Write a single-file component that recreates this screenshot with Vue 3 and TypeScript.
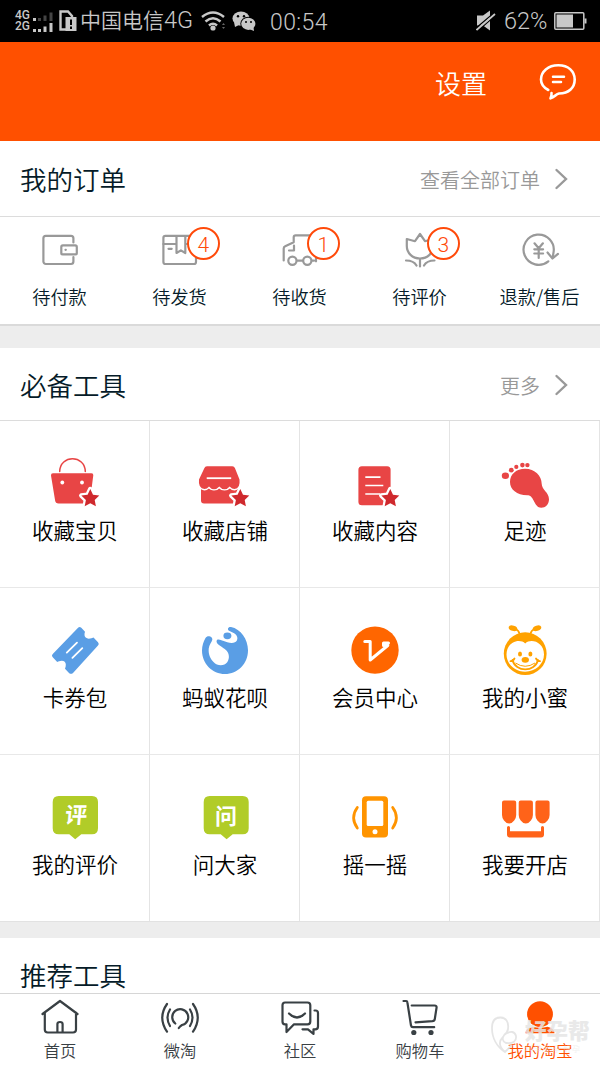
<script setup lang="ts">
interface Order { id: string; label: string; count?: number }
interface Tool { id: string; label: string }

const orders: Order[] = [
  { id: 'pay', label: '待付款' },
  { id: 'ship', label: '待发货', count: 4 },
  { id: 'receive', label: '待收货', count: 1 },
  { id: 'review', label: '待评价', count: 3 },
  { id: 'refund', label: '退款/售后' },
]
const tools: Tool[] = [
  { id: 'bag', label: '收藏宝贝' },
  { id: 'shop', label: '收藏店铺' },
  { id: 'doc', label: '收藏内容' },
  { id: 'foot', label: '足迹' },
  { id: 'ticket', label: '卡券包' },
  { id: 'huabei', label: '蚂蚁花呗' },
  { id: 'member', label: '会员中心' },
  { id: 'bee', label: '我的小蜜' },
  { id: 'rate', label: '我的评价' },
  { id: 'ask', label: '问大家' },
  { id: 'shake', label: '摇一摇' },
  { id: 'open', label: '我要开店' },
]
const tabs: Tool[] = [
  { id: 'home', label: '首页' },
  { id: 'weitao', label: '微淘' },
  { id: 'community', label: '社区' },
  { id: 'cart', label: '购物车' },
  { id: 'me', label: '我的淘宝' },
]
const starred = ['bag', 'shop', 'doc']
const star = 'M90.3 38l2.700 5.700 6.300.9-4.600 4.400 1.200 6.300-5.600-3-5.600 3 1.200-6.300-4.600-4.400 6.300-.9z'
</script>

<template>
  <div class="screen">
    <header class="status">
      <div class="sims">
        <div class="sim"><span>4G</span>
          <svg width="20" height="10" viewBox="0 0 20 10"><rect x="0" y="7" width="3" height="3" fill="#c8c8c8" /><path d="M6.500 10V7M12 10V4.500M18 10V1.500" stroke="#444" stroke-width="3" /></svg>
        </div>
        <div class="sim"><span>2G</span>
          <svg width="20" height="10" viewBox="0 0 20 10"><rect x="0" y="7" width="3" height="3" fill="#c8c8c8" /><path d="M6.500 10V7M12 10V4.500M18 10V1" stroke="#c8c8c8" stroke-width="3" /></svg>
        </div>
      </div>
      <svg class="card" width="18" height="22" viewBox="0 0 18 22">
        <path d="M1.500 1.500H9L13 6V19.500H1.500z" fill="none" stroke="#c8c8c8" stroke-width="2.400" />
        <rect x="6.500" y="7" width="11" height="14" fill="#c8c8c8" /><path d="M12 9.500v5.500M12 16.500v2.500" stroke="#000" stroke-width="2" />
      </svg>
      <span class="carrier">中国电信<i>4G</i></span>
      <svg class="wifi" width="24" height="20" viewBox="0 0 24 20" fill="none" stroke="#c8c8c8" stroke-width="2.500">
        <path d="M1 6Q12-3 23 6M4.500 10.500Q12 4 19.500 10.500M8 14.500Q12 11 16 14.500" /><circle cx="12" cy="17" r="2.600" fill="#c8c8c8" stroke="none" />
        <path d="M21 14l1.500-2 1.500 2zM21 16l1.500 2 1.500-2z" fill="#666" stroke="none" />
      </svg>
      <svg class="wechat" width="24" height="20" viewBox="0 0 24 20">
        <path d="M2 11L3 16l3.500-1.800 2.800.4z" fill="#c8c8c8" />
        <ellipse cx="9" cy="7.500" rx="8.500" ry="7" fill="#c8c8c8" /><ellipse cx="16.300" cy="12.800" rx="8" ry="7" fill="#000" />
        <ellipse cx="16.300" cy="12.800" rx="7.100" ry="6.100" fill="#c8c8c8" /><path d="M17 18l5 2-.5-4z" fill="#c8c8c8" />
        <g fill="#000"><circle cx="6" cy="5.200" r="1.200" /><circle cx="12" cy="5.200" r="1.200" /><circle cx="14" cy="11" r="1" /><circle cx="19" cy="11" r="1" /></g>
      </svg>
      <span class="time">00:54</span>
      <span class="grow"></span>
      <svg class="mute" width="20" height="22" viewBox="0 0 20 22">
        <path d="M1 5.500h6L14 .5v20L7 15.500H1z" fill="#c8c8c8" /><path d="M-1 19L18.500 2.500M1 21.500L20 5" stroke="#000" stroke-width="1.300" /><path d="M.5 20L19 4" stroke="#c8c8c8" stroke-width="1.700" />
      </svg>
      <span class="percent">62%</span>
      <svg class="battery" width="33" height="18" viewBox="0 0 33 18">
        <rect x=".8" y=".8" width="29" height="16.400" rx="1" fill="none" stroke="#c8c8c8" stroke-width="1.500" /><rect x="2.500" y="2.500" width="16.500" height="13" fill="#c8c8c8" /><rect x="30.500" y="6.500" width="2" height="5" fill="#c8c8c8" />
      </svg>
    </header>

    <div class="hero">
      <span class="settings">设置</span>
      <svg class="chat" width="40" height="40" viewBox="0 0 40 40" fill="none" stroke="#fff" stroke-width="2.600" stroke-linecap="round" stroke-linejoin="round">
        <path d="M10.300 30C5.500 27.500 3 23.500 3 19.500 3 11.500 10 5.300 20.300 5.300s16.400 6.200 16.400 14.200S31 33.500 21 33.500c-3 .7-4.500 3.500-8.500 4.800.8-1.500 1.300-3.300 1-5.300" />
        <path d="M15 16.700h11M15 22h8" stroke-width="2.500" />
      </svg>
    </div>

    <section class="orders">
      <div class="heading order-heading"><h2>我的订单</h2><span class="more">查看全部订单</span>
        <svg class="chevron" width="14" height="22" viewBox="0 0 14 22"><path d="M2.500 2L12 11 2.500 20" /></svg>
      </div>
      <div class="order-row">
        <div v-for="o in orders" :key="o.id" class="order">
          <svg width="120" height="50" viewBox="0 0 120 50" fill="none" stroke="#999" stroke-width="2.200" stroke-linecap="round" stroke-linejoin="round">
            <template v-if="o.id === 'pay'">
              <path d="M73.400 17.500V13.200a2.400 2.400 0 0 0-2.400-2.400H45.800a2.400 2.400 0 0 0-2.400 2.400v23.400a2.400 2.400 0 0 0 2.400 2.400H71a2.400 2.400 0 0 0 2.400-2.400V32" />
              <rect x="61.300" y="20.400" width="15.500" height="9" rx="1.500" /><path d="M65.500 24.800h.3" />
            </template>
            <template v-else-if="o.id === 'ship'">
              <rect x="43.400" y="10.800" width="32.600" height="28.200" rx="2" /><path d="M43.400 19H56M65.500 19H76M56.500 11v17l4.400-2.600 4.400 2.600V11M48.500 23.800h3.200" />
            </template>
            <template v-else-if="o.id === 'receive'">
              <path d="M43.700 35.500V23.500q0-1.500 1.500-2.200l8.500-4v-5q0-2 2-2H76v26M49 25.500h5V20.500M57 35.700h6M72 35.700h2" /><circle cx="52.400" cy="35.700" r="4.100" /><circle cx="67.300" cy="35.700" r="4.100" />
            </template>
            <template v-else-if="o.id === 'review'">
              <path d="M46.800 14l8.200 2.200L60 9l5 7.200 8.200-2.200v7c0 7-5.500 12.500-13.200 12.500S46.800 28 46.800 21zM60 34v7.500M46 35.500c4.500 0 8.500 1.500 10.500 5M74.500 35.500c-4.500 0-8.500 1.500-10.500 5" />
            </template>
            <template v-else>
              <path d="M68.300 36.300A15.100 15.100 0 1 1 73.500 27.500L72.700 32.500M67.500 27.500l5 6 5.500-4.600" />
              <path d="M54.500 18.300l4.200 5 4.200-5M54.300 24.300h8.800M54.300 28.500h8.800M58.700 23.500v9.500" />
            </template>
          </svg>
          <span v-if="o.count" class="badge">{{ o.count }}</span>
          <span class="order-label">{{ o.label }}</span>
        </div>
      </div>
    </section>

    <section class="tools">
      <div class="heading tool-heading"><h2>必备工具</h2><span class="more">更多</span>
        <svg class="chevron" width="14" height="22" viewBox="0 0 14 22"><path d="M2.500 2L12 11 2.500 20" /></svg>
      </div>
      <div class="grid">
        <div v-for="t in tools" :key="t.id" class="tool">
          <svg width="150" height="60" viewBox="0 0 150 60">
            <template v-if="t.id === 'bag'">
              <path d="M59.700 20.500C60 3.500 85 3.500 85.300 20.500" fill="none" stroke="#e84545" stroke-width="1.500" stroke-linecap="round" />
              <path d="M53 22.300H91.500q2 0 1.800 2L90 49.500q-.4 3-3 3H58.500q-3 0-3.400-3L51 24.500q-.2-2.200 2-2.200z" fill="#e84545" />
              <circle cx="62.300" cy="31.500" r="1.900" fill="#fff" /><circle cx="82" cy="31.500" r="1.900" fill="#fff" />
            </template>
            <template v-else-if="t.id === 'shop'">
              <path d="M51 36H88V52.500H54q-3 0-3-3z" fill="#e84545" />
              <path d="M57 15.300H82.300q2 0 2.700 2L89.500 28.500Q90.500 37.500 84.500 38 82 38 79.700 35.500 77.500 38.200 74.500 38.200T69.300 35.500Q67 38.200 64 38.200T59 35.500Q57 38 54.500 38 48 37.500 49 28.500L54.300 17.300Q55 15.300 57 15.300z" fill="#e84545" stroke="#fff" stroke-width="2.800" stroke-linejoin="round" paint-order="stroke" />
              <path d="M56.700 27.200h24.500" stroke="#fff" stroke-width="1.800" />
            </template>
            <template v-else-if="t.id === 'doc'">
              <rect x="58.400" y="15.300" width="32.200" height="39" rx="3.500" fill="#e84545" /><path d="M65.300 26.200h15.200M65.300 34.500H83.300M65.300 43H80" stroke="#fff" stroke-width="1.700" />
            </template>
            <g v-else-if="t.id === 'foot'" fill="#e84545">
              <ellipse cx="55.400" cy="24.800" rx="3.600" ry="3.200" /><circle cx="61.300" cy="19.200" r="2.400" /><circle cx="66.300" cy="15.900" r="2.100" /><circle cx="72.400" cy="14.100" r="2.300" /><circle cx="77.400" cy="14.100" r="2.200" />
              <path d="M60 31c0-8 6.500-13.300 15-13.300 10 0 16.500 7 16.700 15 0 6 7.300 8.500 7.300 15.500 0 5-3.500 8.500-7.800 8.500-7 0-7.200-12-13-12.500C67 44.500 60 38.500 60 31z" />
            </g>
            <template v-else-if="t.id === 'ticket'">
              <path d="M78.300 9.500q1.500-1 3 .3l3.700 4q-1.300 4 .7 5.800t5.800.6l2-.7 4.500 4.800q1.600 1.700 0 3.300L73 55q-2 1.700-4 0l-4-4.200q1.800-5-.3-7t-6.500-.2l-1 .4-4.200-4.500q-2-2 0-3.800z" fill="#5a9ee5" />
              <path d="M66.800 34.600L77 24.700M72.400 39.900L82.300 30.200" stroke="#fff" stroke-width="1.800" stroke-linecap="round" />
            </template>
            <template v-else-if="t.id === 'huabei'">
              <path d="M55.500 20c2-3.500 7.500-1.300 6.800 1.800-.3 2-3.300 5-3.600 9C58.300 37 60.500 41 63.500 44c4 4.500 11 4 13.700.3 2.800-4 2-9-1-12-3.500-3.500-9.700-5-9.700-9.200.4-3 4.500-1.200 6.500-.4 5 2.300 12 3.800 14-.5 2-5-3.500-7.500-7.500-9.200-2.800-1.300-1.500-4.500 1.500-4 9.700 2 17 12 17 23.300 0 13.500-10.300 23.800-23 23.800S52 45.500 52 32.500C52 27.500 53.500 23.500 55.500 20z" fill="#5a9ee5" />
              <ellipse cx="77.400" cy="17.800" rx="4" ry="3.400" fill="#5a9ee5" />
            </template>
            <template v-else-if="t.id === 'member'">
              <circle cx="75" cy="32.100" r="23.700" fill="#ff6600" />
              <path d="M64.800 23.500H70.200V42L87.800 27.500H83.500V25H88.500" fill="none" stroke="#fff" stroke-width="3" stroke-linecap="round" stroke-linejoin="round" />
            </template>
            <template v-else-if="t.id === 'bee'">
              <g fill="#ffa200">
                <ellipse cx="63" cy="10.200" rx="4.400" ry="2.700" transform="rotate(18 63 10.200)" /><ellipse cx="87" cy="10.200" rx="4.400" ry="2.700" transform="rotate(-18 87 10.200)" />
                <path d="M65.500 11Q69 12.500 69.500 16M84.500 11Q81 12.500 80.500 16" fill="none" stroke="#ffa200" stroke-width="1.700" />
                <circle cx="75.200" cy="35.700" r="21.400" />
                <path d="M75.200 25.500C69.500 20 56.500 24 56.500 36.500 56.500 46 65 53.700 75.200 53.700S94 46 94 36.500C94 24 81 20 75.200 25.500z" fill="#fff" />
                <ellipse cx="70" cy="36" rx="2" ry="2.600" /><ellipse cx="80.400" cy="36" rx="2" ry="2.600" /><ellipse cx="75.300" cy="41.800" rx="3.700" ry="2.900" />
                <path d="M60.500 43.200q2.500 0 4-2.700M62.500 42C65.500 54.500 85 54.500 88 42M90 43.200q-2.500 0-4-2.700" fill="none" stroke="#ffa200" stroke-width="1.800" stroke-linecap="round" />
                <path d="M65.500 45Q75.200 51.500 85 45" fill="none" stroke="#ffa200" stroke-width="1" />
              </g>
            </template>
            <template v-else-if="t.id === 'rate'">
              <path d="M58.700 11H92q6 0 6 6V43.300q0 6-6 6H81.300L75.200 54.200 69.300 49.300H58.700q-6 0-6-6V17q0-6 6-6z" fill="#b1cc28" /><text class="glyph" transform="translate(75.500 38) skewX(-5)">评</text>
            </template>
            <template v-else-if="t.id === 'ask'">
              <path d="M59.700 11H92.700q6 0 6 6V43.300q0 6-6 6H82.700L76.600 54.200 70.700 49.300H59.700q-6 0-6-6V17q0-6 6-6z" fill="#b1cc28" /><text class="glyph" x="76" y="39">问</text>
            </template>
            <template v-else-if="t.id === 'shake'">
              <rect x="62" y="11.200" width="26" height="41.200" rx="4" fill="#ff9400" /><rect x="66.700" y="15.800" width="16.600" height="25.300" rx="1.500" fill="#fff" /><circle cx="75" cy="46.700" r="2.500" fill="#fff" />
              <path d="M57.300 22.500Q50 32.700 57.300 43M92.700 22.500Q100 32.700 92.700 43" fill="none" stroke="#ff9400" stroke-width="2.800" stroke-linecap="round" />
            </template>
            <g v-else fill="#ff6319">
              <path v-for="x in [52, 68.700, 85.400]" :key="x" :transform="`translate(${x} 15.400)`" d="M2 0H12.200q2 0 2 2V14.500q0 3-2 5.500Q10 23 7.100 23T2 20Q0 17.500 0 14.500V2Q0 0 2 0z" />
              <path d="M58.500 41q1.500 0 1.500 1.500V46.200H91V42.500q0-1.500 1.500-1.500T94 42.500v7q0 3-3 3H60q-3 0-3-3v-7q0-1.500 1.500-1.500z" />
            </g>
            <path v-if="starred.includes(t.id)" :d="star" fill="#cf292d" stroke="#fff" stroke-width="4.500" stroke-linejoin="round" paint-order="stroke" />
          </svg>
          <span class="tool-label">{{ t.label }}</span>
        </div>
      </div>
    </section>

    <section class="suggested"><h2>推荐工具</h2></section>

    <nav class="tabs">
      <div v-for="t in tabs" :key="t.id" class="tab" :class="{ active: t.id === 'me' }">
        <svg width="120" height="43" viewBox="0 0 120 43" fill="none" stroke="#394044" stroke-width="2.200" stroke-linecap="round" stroke-linejoin="round">
          <path v-if="t.id === 'home'" d="M42.500 19L60 6l17.500 13M44.800 17.500V34.500q0 3 3 3H73q3 0 3-3v-17M57.400 37V29q0-2 2.600-2t2.600 2v8" />
          <path v-else-if="t.id === 'weitao'" d="M58.800 33q1-1.500 3.200-3A8 8 0 1 0 55.300 28.500M50 14.500Q45 22.500 50 31M70 14.500Q75 22.500 70 31M47 9Q37.500 22.500 47 36.700M73 9Q82.500 22.500 73 36.700" />
          <path v-else-if="t.id === 'community'" d="M45 7.500H67.500q2.800 0 2.800 2.800V26.500q0 2.800-2.800 2.800H54L46.500 37v-7.700H45q-2.500 0-2.500-2.800V10.300q0-2.800 2.500-2.800zM49 18.500Q57 26.500 65 18.500M74.500 15.500H75.500q2.500 0 2.500 2.500V31.500q0 2.800-2.800 2.800H73.500V39L68 34.300H62.500" />
          <template v-else-if="t.id === 'cart'"><path d="M43.500 6h2.700q1 0 1.200 1.500L51 30.500q.3 1.700 2 1.700H74.200M51.700 10.500H74.500q2.500 0 2 2.500L74.800 24q-.3 2-2.500 2.200L55.500 27.300" /><g fill="#394044" stroke="none"><circle cx="53.800" cy="37.500" r="2.600" /><circle cx="71" cy="37.500" r="2.600" /></g></template>
          <g v-else fill="#ff5000" stroke="none"><circle cx="60" cy="19.200" r="12.900" /><path d="M45.500 38.300q0-5 7-6.500 7.500 2 15 0 7 1.500 7 6.500z" /></g>
        </svg>
        <span class="tab-label">{{ t.label }}</span>
      </div>
    </nav>

    <div class="watermark">
      <svg width="27" height="40" viewBox="0 0 27 40" fill="none" stroke="#e1e1e1" stroke-width="1.800">
        <path d="M14 36C6 31 1 22 1 12 1 5 4 1.500 9.500 1.500S18 6 17 13q-.5 4-4 6M14 18q9-5 11 2 1 8-10 7-6-3-1-9zM12 21q-7 7 2 15l7-7" />
      </svg>
      <div class="mark-words"><b>好孕帮</b><small>科学 助孕 好孕</small></div>
    </div>
  </div>
</template>

<style>
html, body { margin: 0; background: #fff; overflow: hidden; }
</style>

<style scoped>
.screen { position: relative; width: 600px; height: 1067px; overflow: hidden; display: flex; flex-direction: column; background: #ededed; font-family: "Noto Sans CJK SC", sans-serif; font-weight: 350; }
.screen * { box-sizing: border-box; }
.screen svg { display: block; flex: none; }
.status { height: 41.500px; flex: none; background: #000; color: #c8c8c8; display: flex; align-items: center; padding: 0 13px 0 15px; white-space: nowrap; }
.sims { width: 39px; padding-top: 1px; }
.sim { height: 11px; display: flex; align-items: center; font: 500 12px/11px Roboto, sans-serif; }
.sim span { width: 18px; }
.card { margin-left: 5px; }
.carrier { width: 118px; margin-left: 3px; font-size: 21px; line-height: 38px; margin-top: -3px; }
.carrier i { font: 300 23.500px Roboto, sans-serif; }
.wifi { margin-left: 3px; }
.wechat { margin-left: 7px; }
.time { margin-left: 14px; font: 300 23px/41px Roboto, sans-serif; padding-top: 3px; letter-spacing: .4px; }
.grow { flex: 1; }
.percent { width: 46px; margin-left: 8px; font: 300 23.500px/41px Roboto, sans-serif; padding-top: 2px; }
.battery { margin-left: 4px; }
.hero { height: 99.500px; flex: none; background: #ff5000; color: #fff; display: flex; align-items: center; justify-content: flex-end; padding: 0 22px 16px 0; }
.settings { font-size: 26px; line-height: 40px; margin-right: 51px; }
.chat { margin-top: -7px; }
.orders { height: 185px; flex: none; background: #fff; border-bottom: 2px solid #dadada; }
.heading { display: flex; align-items: center; padding: 0 32px 0 20px; border-bottom: 1px solid #dcdcdc; }
.order-heading { height: 75.500px; padding-top: 1px; }
h2 { flex: 1; margin: 0; font-size: 26.500px; line-height: 36px; font-weight: 350; color: #051b28; }
.more { color: #999; font-size: 20px; line-height: 30px; margin-right: 14px; padding-top: 2px; }
.chevron { fill: none; stroke: #999; stroke-width: 2.400; stroke-linecap: round; }
.order-row { display: flex; padding-top: 8.500px; }
.order { position: relative; width: 120px; display: flex; flex-direction: column; align-items: center; }
.badge { position: absolute; left: 66.800px; top: 1.800px; width: 33px; height: 33px; border: 2.500px solid #ff4a0a; border-radius: 50%; background: #fff; color: #ff4a0a; font: 300 21px/32px Roboto, sans-serif; text-align: center; }
.order-label { margin: 6.500px 1px 0 0; font-size: 18.200px; line-height: 28px; color: #051b28; white-space: nowrap; }
.tools { margin-top: 22px; height: 574px; flex: none; background: #fff; border-bottom: 1px solid #e2e2e2; }
.tool-heading { height: 73px; padding-top: 2px; }
.grid { display: grid; grid-template-columns: repeat(4, 150px); grid-template-rows: 167px 167px 166px; }
.tool { border-right: 1px solid #e4e4e4; border-bottom: 1px solid #e8e8e8; padding-top: 30px; display: flex; flex-direction: column; align-items: center; }
.tool:nth-child(n + 9) { border-bottom: 0; }
.tool svg { align-self: flex-start; width: 150px; margin-right: -1px; }
.tool-label { margin: 3px -1px 0 0; font-size: 21.500px; line-height: 32px; color: #000; white-space: nowrap; }
.tool:nth-child(n + 5) .tool-label { margin-top: 2.500px; }
.glyph { font: 700 22px "Noto Sans CJK SC", sans-serif; fill: #fff; text-anchor: middle; }
.suggested { margin-top: 16px; flex: 1; background: #fff; padding: 19px 20px 0; min-height: 0; }
.tabs { height: 74px; flex: none; background: #fff; border-top: 1px solid #d6d6d6; display: flex; padding-top: 1px; }
.tab { width: 120px; display: flex; flex-direction: column; align-items: center; color: #394044; }
.tab-label { font-size: 16.300px; line-height: 24px; margin-top: 0; white-space: nowrap; }
.active { color: #ff5000; }
.watermark { position: absolute; left: 491px; top: 1016px; display: flex; gap: 7px; opacity: .85; color: #e6e6e6; }
.mark-words { display: flex; flex-direction: column; }
.mark-words b { font-size: 21.500px; line-height: 28px; font-weight: 900; }
.mark-words small { font-size: 8px; line-height: 9px; white-space: nowrap; letter-spacing: .5px; opacity: .6; }
</style>
